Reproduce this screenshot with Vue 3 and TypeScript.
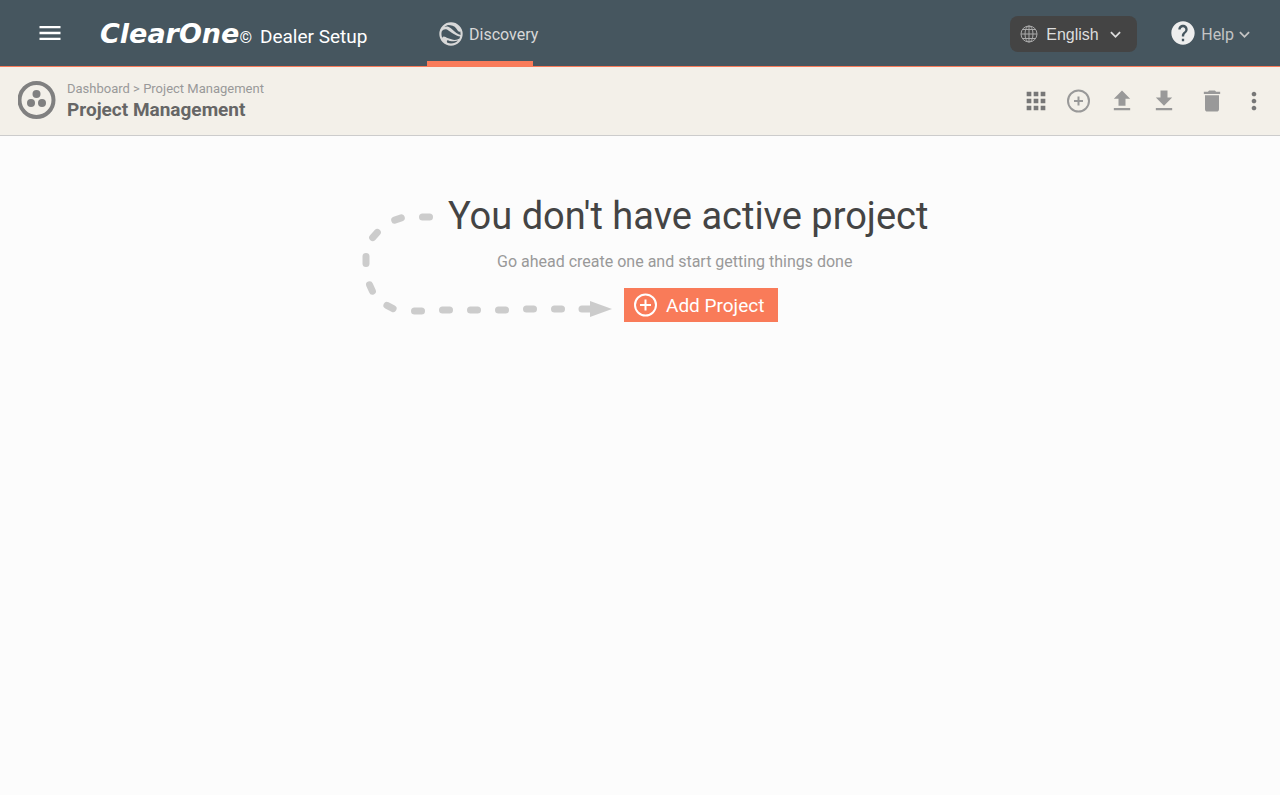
<script setup lang="ts">
import { ref } from 'vue'

interface Dash {
  x: number
  y: number
  angle: number
}

const language = ref<string>('en')

const dashes: Dash[] = [
  { x: 74, y: 9, angle: 0 },
  { x: 46, y: 11, angle: -18 },
  { x: 23, y: 27, angle: -48 },
  { x: 14, y: 52, angle: 90 },
  { x: 19, y: 80, angle: 66 },
  { x: 38, y: 99, angle: 28 },
  { x: 66, y: 103, angle: 0 },
  { x: 94, y: 102, angle: 0 },
  { x: 122, y: 102, angle: 0 },
  { x: 150, y: 102, angle: 0 },
  { x: 178, y: 101, angle: 0 },
  { x: 206, y: 101, angle: 0 },
]
</script>

<template>
  <div class="page">
    <header class="topbar">
      <button class="icon-button menu" type="button" aria-label="Menu">
        <svg viewBox="0 0 24 24"><path d="M3 18h18v-2H3v2zm0-5h18v-2H3v2zm0-7v2h18V6H3z" /></svg>
      </button>
      <div class="brand">
        <span class="brand-name">ClearOne</span>
        <span class="brand-mark">©</span>
        <span class="brand-product">Dealer Setup</span>
      </div>
      <nav class="tabs">
        <a class="tab" href="#discovery">
          <svg viewBox="0 0 24 24" aria-hidden="true">
            <path fill-rule="evenodd" d="M12.4,7.56C9.6,4.91 7.3,5.65 6.31,6.1C7.06,5.38 7.94,4.8 8.92,4.4C11.7,4.3 14.83,4.84 16.56,7.31C16.56,7.31 19,11.5 19.86,9.65C20.08,10.4 20.2,11.18 20.2,12C20.2,12.3 20.18,12.59 20.15,12.88C18.12,12.65 15.33,10.32 12.4,7.56M19.1,16.1C18.16,16.47 17,17.1 15.14,17.1C13.26,17.1 11.61,16.35 9.56,15.7C7.7,15.11 7,14.2 5.72,14.2C5.06,14.2 4.73,14.86 4.55,15.41C4.07,14.37 3.8,13.22 3.8,12C3.8,11.19 3.92,10.42 4.14,9.68C5.4,8.1 7.33,7.12 10.09,9.26C10.09,9.26 16.32,13.92 19.88,14.23C19.7,14.89 19.43,15.5 19.1,16.1M12,20.2C10.88,20.2 9.81,19.97 8.83,19.56C8.21,18.08 8.22,16.92 9.95,17.5C9.95,17.5 13.87,19 18,17.58C16.5,19.19 14.37,20.2 12,20.2M12,2A10,10 0 0,0 2,12A10,10 0 0,0 12,22A10,10 0 0,0 22,12A10,10 0 0,0 12,2Z" />
          </svg>
          <span>Discovery</span>
        </a>
      </nav>
      <div class="language">
        <svg class="globe" viewBox="0 0 18 18" aria-hidden="true">
          <circle cx="9" cy="9" r="8" />
          <ellipse cx="9" cy="9" rx="4" ry="8" />
          <path d="M9 1v16M1 9h16M2.500 4.500h13M2.500 13.500h13" />
        </svg>
        <select v-model="language" aria-label="Language">
          <option value="en">English</option>
        </select>
        <svg class="chevron" viewBox="0 0 12 12" aria-hidden="true"><path d="M1 3.500l5 5 5-5" /></svg>
      </div>
      <button class="help" type="button">
        <svg class="help-icon" viewBox="0 0 24 24" aria-hidden="true">
          <path d="M12 2C6.480 2 2 6.480 2 12s4.480 10 10 10 10-4.480 10-10S17.520 2 12 2zm1 17h-2v-2h2v2zm2.070-7.750l-.9.920C13.450 12.900 13 13.500 13 15h-2v-.5c0-1.100.45-2.100 1.170-2.830l1.240-1.260c.37-.36.59-.86.59-1.410 0-1.100-.9-2-2-2s-2 .9-2 2H8c0-2.210 1.790-4 4-4s4 1.790 4 4c0 .88-.36 1.680-.93 2.250z" />
        </svg>
        <span>Help</span>
        <svg class="chevron" viewBox="0 0 12 12" aria-hidden="true"><path d="M1 3.500l5 5 5-5" /></svg>
      </button>
    </header>

    <section class="subbar">
      <svg class="page-icon" viewBox="0 0 38 38" aria-hidden="true">
        <circle class="ring" cx="18.500" cy="19" r="17" />
        <circle cx="18.500" cy="13" r="4" />
        <circle cx="13" cy="22" r="4" />
        <circle cx="24" cy="22" r="4" />
      </svg>
      <div class="headings">
        <p class="breadcrumb"><a href="#dashboard">Dashboard</a> &gt; <a href="#projects">Project Management</a></p>
        <h1>Project Management</h1>
      </div>
      <div class="toolbar">
        <div class="tool-group">
          <button class="icon-button dark" type="button" aria-label="Grid view">
            <svg viewBox="0 0 24 24"><path d="M4 8h4V4H4v4zm6 12h4v-4h-4v4zm-6 0h4v-4H4v4zm0-6h4v-4H4v4zm6 0h4v-4h-4v4zm6-10v4h4V4h-4zm-6 4h4V4h-4v4zm6 6h4v-4h-4v4zm0 6h4v-4h-4v4z" /></svg>
          </button>
          <button class="icon-button" type="button" aria-label="Add project to list">
            <svg class="outline" viewBox="0 0 28 28"><circle cx="14.500" cy="14" r="10.500" /><path d="M14.500 9.500v9M10 14h9" /></svg>
          </button>
        </div>
        <div class="tool-group">
          <button class="icon-button" type="button" aria-label="Upload">
            <svg viewBox="0 0 24 24"><path d="M9 16h6v-6h4l-7-7-7 7h4zm-4 2h14v2H5z" /></svg>
          </button>
          <button class="icon-button" type="button" aria-label="Download">
            <svg viewBox="0 0 24 24"><path d="M19 9h-4V3H9v6H5l7 7 7-7zM5 18v2h14v-2H5z" /></svg>
          </button>
        </div>
        <div class="tool-group record">
          <button class="icon-button" type="button" aria-label="Delete">
            <svg viewBox="0 0 24 24"><path d="M6 19c0 1.100.9 2 2 2h8c1.100 0 2-.9 2-2V7H6v12zM19 4h-3.500l-1-1h-5l-1 1H5v2h14V4z" /></svg>
          </button>
          <button class="icon-button dark" type="button" aria-label="More">
            <svg viewBox="0 0 24 24"><path d="M12 8c1.100 0 2-.9 2-2s-.9-2-2-2-2 .9-2 2 .9 2 2 2zm0 2c-1.100 0-2 .9-2 2s.9 2 2 2 2-.9 2-2-.9-2-2-2zm0 6c-1.100 0-2 .9-2 2s.9 2 2 2 2-.9 2-2-.9-2-2-2z" /></svg>
          </button>
        </div>
      </div>
    </section>

    <main class="content">
      <div class="empty">
        <svg class="trail" viewBox="0 0 264 112" aria-hidden="true">
          <line
            v-for="(dash, index) in dashes"
            :key="index"
            x1="-3.500"
            x2="3.500"
            y1="0"
            y2="0"
            :transform="`translate(${dash.x} ${dash.y}) rotate(${dash.angle})`"
          />
          <line x1="230" y1="101" x2="240" y2="101" />
          <polygon points="238,93 260,101 238,109" />
        </svg>
        <div class="message">
          <h2>You don't have active project</h2>
          <p>Go ahead create one and start getting things done</p>
          <button class="add" type="button">
            <svg class="outline" viewBox="0 0 24 24" aria-hidden="true"><circle cx="11.500" cy="12" r="10.500" /><path d="M11.500 6.500v11M6 12h11" /></svg>
            <span>Add Project</span>
          </button>
        </div>
      </div>
    </main>
  </div>
</template>

<style>
body {
  margin: 0;
  background: #fcfcfc;
}
</style>

<style scoped>
.page {
  min-height: 100vh;
  font-family: Roboto, "Liberation Sans", sans-serif;
  color: #444;
  background: #fcfcfc;
}

button,
select {
  margin: 0;
  padding: 0;
  border: 0;
  background: none;
  font: inherit;
  color: inherit;
  cursor: pointer;
}

a {
  color: inherit;
  text-decoration: none;
}

svg {
  display: block;
  flex: none;
  fill: currentColor;
}

.icon-button svg {
  width: 28px;
  height: 28px;
}

.outline {
  fill: none;
  stroke: currentColor;
  stroke-width: 2;
}

.chevron {
  width: 11px;
  height: 11px;
  fill: none;
  stroke: currentColor;
  stroke-width: 2;
}

.topbar {
  display: flex;
  align-items: center;
  height: 66px;
  padding: 0 30px 0 36px;
  border-bottom: 1px solid #f97b59;
  background: #46565f;
  color: #fff;
}

.brand {
  display: flex;
  align-items: baseline;
  margin-left: 36px;
  width: 327px;
  padding-top: 2px;
  white-space: nowrap;
}

.brand-name {
  font: italic bold 27px/36px "DejaVu Sans", Verdana, sans-serif;
}

.brand-mark {
  font-size: 16px;
}

.brand-product {
  margin-left: 8px;
  font-size: 19px;
}

.tabs {
  align-self: stretch;
  display: flex;
  flex: 1;
}

.tab {
  position: relative;
  display: flex;
  align-items: center;
  gap: 4px;
  padding: 2px 0 0 10px;
  font-size: 16px;
  color: #d8d8d8;
}

.tab svg {
  width: 28px;
  height: 28px;
}

.tab::after {
  content: "";
  position: absolute;
  left: 0;
  bottom: 0;
  width: 106px;
  height: 5px;
  background: #f97b59;
}

.language {
  display: grid;
  align-items: center;
  margin: 2px 32px 0 0;
  border-radius: 8px;
  background: #444;
  color: #ddd;
}

.language > * {
  grid-area: 1 / 1;
}

.language select {
  width: 127px;
  height: 36px;
  padding: 0 32px 0 36px;
  appearance: none;
  font-family: "Liberation Sans", Arial, sans-serif;
  font-size: 16px;
}

.language svg {
  pointer-events: none;
}

.language .chevron {
  justify-self: end;
  margin-right: 16px;
}

.globe {
  width: 18px;
  height: 18px;
  margin-left: 10px;
  fill: none;
  stroke: #aaa;
  stroke-width: 1;
}

.help {
  display: flex;
  align-items: center;
  font-size: 16px;
  color: #c4c4c4;
}

.help-icon {
  width: 28px;
  height: 28px;
  margin-right: 4px;
  color: #eee;
}

.help span,
.help .chevron {
  margin-top: 2px;
}

.help .chevron {
  margin-left: 5px;
}

.subbar {
  display: flex;
  align-items: center;
  height: 68px;
  padding: 0 12px 0 18px;
  border-bottom: 1px solid #ccc;
  background: #f3f0e9;
}

.page-icon {
  width: 38px;
  height: 38px;
  margin-bottom: 3px;
  color: #808080;
}

.ring {
  fill: none;
  stroke: currentColor;
  stroke-width: 4;
}

.headings {
  flex: 1;
  margin-left: 11px;
}

.breadcrumb {
  margin: 0;
  font-size: 13px;
  line-height: 18px;
  color: #999;
}

h1 {
  margin: 0;
  font-size: 19px;
  font-weight: 700;
  line-height: 24px;
  color: #666;
}

.toolbar,
.tool-group {
  display: flex;
  align-items: center;
}

.toolbar {
  gap: 16px;
}

.tool-group {
  gap: 14px;
  color: #999;
}

.tool-group.record {
  margin-left: 4px;
}

.tool-group .dark {
  color: #777;
}

.content {
  display: flex;
  justify-content: center;
  padding: 56px 16px;
}

.empty {
  display: grid;
  width: 576px;
}

.trail,
.message {
  grid-area: 1 / 1;
}

.trail {
  width: 264px;
  height: 112px;
  margin-top: 16px;
  fill: #ccc;
  stroke: #ccc;
  stroke-width: 7;
  stroke-linecap: round;
}

.trail polygon {
  stroke: none;
}

.message {
  display: flex;
  flex-direction: column;
  align-items: flex-start;
  padding-left: 96px;
  white-space: nowrap;
}

h2 {
  margin: 0;
  font-size: 38px;
  font-weight: 400;
  line-height: 48px;
  color: #444;
}

.message p {
  margin: 10px 0 14px 49px;
  font-size: 16px;
  line-height: 24px;
  color: #999;
}

.add {
  display: flex;
  align-items: center;
  gap: 8px;
  height: 34px;
  margin-left: 176px;
  padding: 0 14px 0 10px;
  background: #f97b59;
  color: #fff;
  font-size: 19px;
}

.add svg {
  width: 24px;
  height: 24px;
}
</style>
